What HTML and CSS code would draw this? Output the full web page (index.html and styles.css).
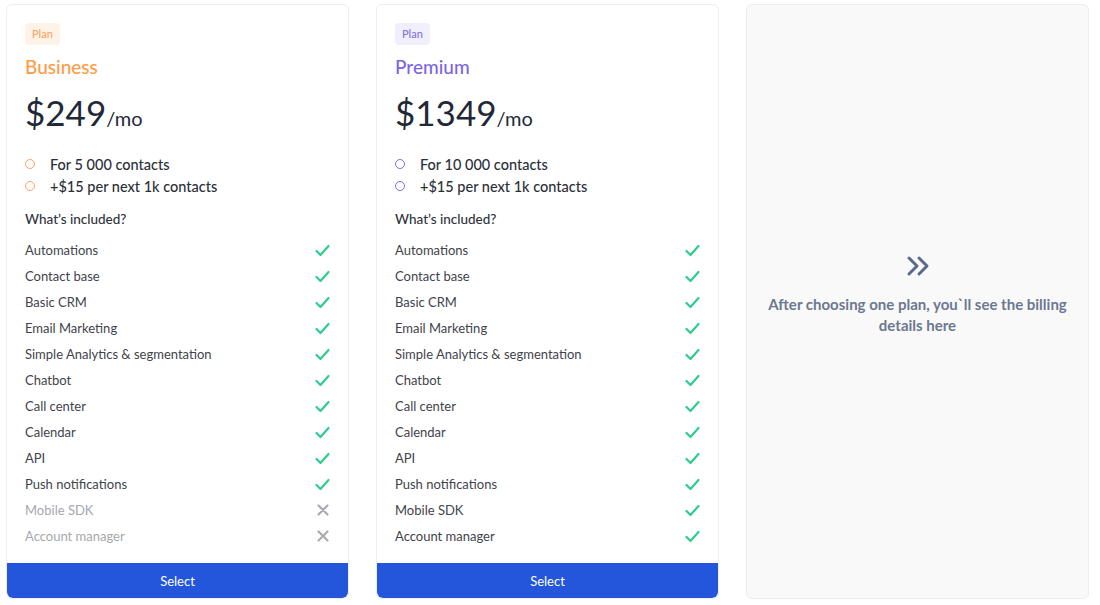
FILE: index.html
```html
<!DOCTYPE html>
<html lang="en">
<head>
    <meta charset="UTF-8">
    <meta name="viewport" content="width=device-width, initial-scale=1.0">
    <title>Choose a plan</title>
    <link rel="stylesheet" href="styles.css">
</head>
<body>
    <div class="plans">
        <div class="card business">
            <div class="card-body">
                <span class="badge">Plan</span>
                <h2 class="plan-name">Business</h2>
                <div class="price">$249<span class="per">/mo</span></div>
                <ul class="terms">
                    <li><span class="dot"></span>For 5 000 contacts</li>
                    <li><span class="dot"></span>+$15 per next 1k contacts</li>
                </ul>
                <div class="included">What’s included?</div>
                <ul class="features">
                    <li>Automations<span class="yes"></span></li>
                    <li>Contact base<span class="yes"></span></li>
                    <li>Basic CRM<span class="yes"></span></li>
                    <li>Email Marketing<span class="yes"></span></li>
                    <li>Simple Analytics &amp; segmentation<span class="yes"></span></li>
                    <li>Chatbot<span class="yes"></span></li>
                    <li>Call center<span class="yes"></span></li>
                    <li>Calendar<span class="yes"></span></li>
                    <li>API<span class="yes"></span></li>
                    <li>Push notifications<span class="yes"></span></li>
                    <li class="off">Mobile SDK<span class="no"></span></li>
                    <li class="off">Account manager<span class="no"></span></li>
                </ul>
            </div>
            <button class="select">Select</button>
        </div>

        <div class="card premium">
            <div class="card-body">
                <span class="badge">Plan</span>
                <h2 class="plan-name">Premium</h2>
                <div class="price">$1349<span class="per">/mo</span></div>
                <ul class="terms">
                    <li><span class="dot"></span>For 10 000 contacts</li>
                    <li><span class="dot"></span>+$15 per next 1k contacts</li>
                </ul>
                <div class="included">What’s included?</div>
                <ul class="features">
                    <li>Automations<span class="yes"></span></li>
                    <li>Contact base<span class="yes"></span></li>
                    <li>Basic CRM<span class="yes"></span></li>
                    <li>Email Marketing<span class="yes"></span></li>
                    <li>Simple Analytics &amp; segmentation<span class="yes"></span></li>
                    <li>Chatbot<span class="yes"></span></li>
                    <li>Call center<span class="yes"></span></li>
                    <li>Calendar<span class="yes"></span></li>
                    <li>API<span class="yes"></span></li>
                    <li>Push notifications<span class="yes"></span></li>
                    <li>Mobile SDK<span class="yes"></span></li>
                    <li>Account manager<span class="yes"></span></li>
                </ul>
            </div>
            <button class="select">Select</button>
        </div>

        <div class="billing">
            <svg class="arrows" width="24" height="24" viewBox="0 0 24 24" fill="none" stroke="currentColor" stroke-width="3" stroke-linecap="round" stroke-linejoin="round">
                <path d="M3 4l8 8-8 8"/>
                <path d="M13 4l8 8-8 8"/>
            </svg>
            <p>After choosing one plan, you`ll see the billing details here</p>
        </div>
    </div>

    <script>
        // swap the empty markers for icons
        const check = '<svg width="15" height="13" viewBox="0 0 15 13" fill="none" stroke="#2ecc8f" stroke-width="2.2" stroke-linecap="round" stroke-linejoin="round"><path d="M1.5 7l4 4 8-9"/></svg>';
        const cross = '<svg width="12" height="12" viewBox="0 0 12 12" fill="none" stroke="#a9abb0" stroke-width="2.2" stroke-linecap="round"><path d="M1.5 1.5l9 9M10.5 1.5l-9 9"/></svg>';

        document.querySelectorAll('.yes').forEach(el => el.innerHTML = check);
        document.querySelectorAll('.no').forEach(el => el.innerHTML = cross);
    </script>
</body>
</html>
```

FILE: styles.css
```css
body {
    margin: 0;
    padding: 4px 6px;
    background: #fff;
    font-family: 'Lato', 'Noto Sans', sans-serif;
    color: #2f3440;
}

.plans {
    display: grid;
    grid-template-columns: repeat(3, 343px);
    gap: 27px;
}

.card {
    height: 595px;
    box-sizing: border-box;
    border: 1px solid #eceef3;
    border-radius: 6px;
    background: #fff;
    display: flex;
    flex-direction: column;
    overflow: hidden;
}

.card-body {
    padding: 17px 18px 0;
}

.badge {
    display: inline-block;
    height: 22px;
    line-height: 22px;
    padding: 0 7px;
    border-radius: 4px;
    font-size: 11px;
    font-weight: 500;
}

.business .badge {
    background: #fff3e7;
    color: #f7a566;
}

.premium .badge {
    background: #f1effb;
    color: #8474e4;
}

.plan-name {
    margin: 10px 0 0;
    font-size: 19px;
    line-height: 24px;
    font-weight: 500;
}

.business .plan-name { color: #ff9b45; }
.premium .plan-name { color: #7b65e3; }

.price {
    margin-top: 13px;
    font-size: 35px;
    line-height: 40px;
    color: #1f2937;
}

.per {
    font-size: 20px;
}

.terms {
    list-style: none;
    margin: 15px 0 0;
    padding: 0;
}

.terms li {
    display: flex;
    align-items: center;
    height: 22px;
    font-size: 14.5px;
    font-weight: 500;
    color: #2b2f38;
}

.dot {
    flex: none;
    width: 10px;
    height: 10px;
    box-sizing: border-box;
    border-radius: 50%;
    margin: 0 15px 0 0;
    border: 1.5px solid;
}

.business .dot { border-color: #ffa262; }
.premium .dot { border-color: #7f6fe0; }

.included {
    margin-top: 12px;
    font-size: 13.5px;
    line-height: 20px;
    font-weight: 500;
    color: #2f333b;
}

.features {
    list-style: none;
    margin: 8px 0 0;
    padding: 0;
}

.features li {
    display: flex;
    justify-content: space-between;
    align-items: center;
    height: 26px;
    font-size: 13px;
    color: #3f434b;
}

.features li.off {
    color: #a6a8ad;
}

.yes, .no {
    display: flex;
    width: 15px;
    justify-content: center;
}

.select {
    margin-top: auto;
    height: 35px;
    border: 0;
    background: #2456dc;
    color: #fff;
    font-family: inherit;
    font-size: 13px;
    border-radius: 0 0 6px 6px;
}

.billing {
    height: 595px;
    box-sizing: border-box;
    border: 1px solid #eceef3;
    border-radius: 6px;
    background: #f9f9fa;
    display: flex;
    flex-direction: column;
    align-items: center;
    justify-content: center;
    color: #5a6a88;
    padding-bottom: 14px;
}

.billing p {
    margin: 16px 0 0;
    text-align: center;
    font-size: 15px;
    line-height: 21px;
    font-weight: 700;
    color: #6b7890;
    padding: 0 12px;
}
```
